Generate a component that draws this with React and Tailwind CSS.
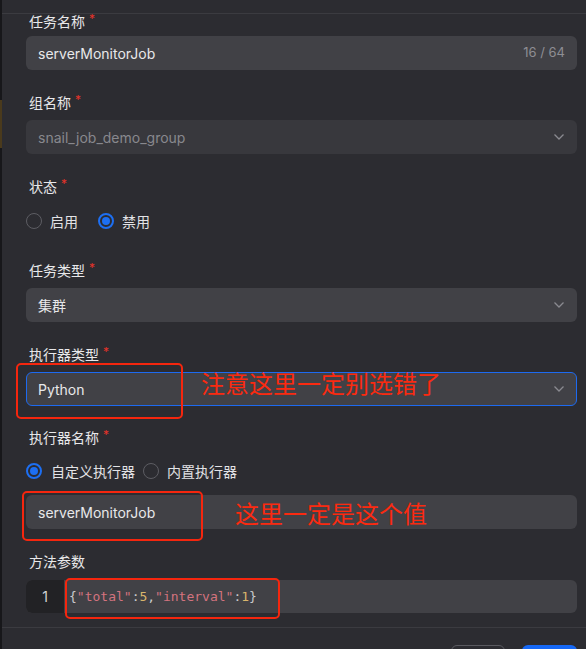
import React from "react";

const cjk = "font-['Inter','Noto_Sans_CJK_SC',sans-serif]";

function Label({ text, required = true, first = false, className = "" }) {
  return (
    <div
      className={`flex items-center pl-[3px] text-[14px] text-[#e8e8ea] ${
        first ? "h-[16px] leading-[16px]" : "h-[22px] leading-[22px]"
      } ${className}`}
    >
      <span>{text}</span>
      {required && <span className="ml-[4px] text-[#e5332a] text-[12px] leading-none relative top-[-3px]">*</span>}
    </div>
  );
}

function Chevron() {
  return (
    <svg width="12" height="8" viewBox="0 0 12 8" className="shrink-0">
      <polyline points="1.5,1.5 6,6 10.5,1.5" fill="none" stroke="#8a8a90" strokeWidth="1.3" />
    </svg>
  );
}

function Select({ value, disabled, focused }) {
  return (
    <div
      className={`h-[34px] rounded-[6px] flex items-center justify-between text-[14px] ${
        disabled ? "bg-[#38383d] text-[#88888e]" : "bg-[#414146] text-[#e8e8ea]"
      } ${focused ? "border border-[#1d6af0] px-[11px]" : "px-[12px]"}`}
    >
      <span>{value}</span>
      <Chevron />
    </div>
  );
}

function Radio({ checked }) {
  return checked ? (
    <span className="w-[16px] h-[16px] rounded-full border-[2px] border-[#1d6ff2] flex items-center justify-center shrink-0">
      <span className="w-[8px] h-[8px] rounded-full bg-[#1d6ff2]" />
    </span>
  ) : (
    <span className="block w-[16px] h-[16px] rounded-full border border-[#5d5d63] shrink-0" />
  );
}

export default function App() {
  return (
    <div className={`w-[586px] h-[649px] overflow-hidden flex bg-[#2c2c31] ${cjk}`}>
      {/* left edge of the page behind the drawer */}
      <div className="w-[2px] bg-[#17171a] flex flex-col">
        <div className="h-[100px]" />
        <div className="h-[48px] bg-[#4a3a1c]" />
      </div>

      <div className="flex-1 flex flex-col">
        <div className="h-[14px] border-b border-[#3b3b40] shrink-0" />

        <div className="pl-[24px] pr-[9px] flex flex-col">
          {/* 任务名称 */}
          <Label text="任务名称" first />
          <div className="mt-[6px] h-[34px] rounded-[6px] bg-[#414146] flex items-center justify-between px-[12px] text-[14px]">
            <span className="text-[#e8e8ea]">serverMonitorJob</span>
            <span className="text-[13px] text-[#8e8e94]">16 / 64</span>
          </div>

          {/* 组名称 */}
          <Label text="组名称" className="mt-[22px]" />
          <div className="mt-[6px]">
            <Select value="snail_job_demo_group" disabled />
          </div>

          {/* 状态 */}
          <Label text="状态" className="mt-[22px]" />
          <div className="mt-[12px] h-[22px] flex items-center text-[14px] text-[#e3e3e6]">
            <Radio />
            <span className="ml-[8px]">启用</span>
            <span className="ml-[20px]">
              <Radio checked />
            </span>
            <span className="ml-[8px]">禁用</span>
          </div>

          {/* 任务类型 */}
          <Label text="任务类型" className="mt-[28px]" />
          <div className="mt-[6px]">
            <Select value="集群" />
          </div>

          {/* 执行器类型 */}
          <Label text="执行器类型" className="mt-[22px]" />
          <div className="mt-[6px] relative">
            <Select value="Python" focused />
            <div className="absolute left-[-10px] top-[-9px] w-[167px] h-[56px] border-[2px] border-[#f5260e] rounded-[5px]" />
            <div className="absolute left-[175px] top-[1px] text-[24px] leading-[24px] text-[#fb2a10] whitespace-nowrap">
              注意这里一定别选错了
            </div>
          </div>

          {/* 执行器名称 */}
          <Label text="执行器名称" className="mt-[21px]" />
          <div className="mt-[11px] h-[22px] flex items-center text-[14px] text-[#e3e3e6]">
            <Radio checked />
            <span className="ml-[9px]">自定义执行器</span>
            <span className="ml-[8px]">
              <Radio />
            </span>
            <span className="ml-[8px]">内置执行器</span>
          </div>
          <div className="mt-[13px] relative">
            <div className="h-[34px] rounded-[6px] bg-[#414146] flex items-center px-[12px] text-[14px] text-[#e8e8ea]">
              serverMonitorJob
            </div>
            <div className="absolute left-[-4px] top-[-4px] w-[181px] h-[50px] border-[2px] border-[#f5260e] rounded-[5px]" />
            <div className="absolute left-[209px] top-[8px] text-[24px] leading-[24px] text-[#fb2a10] whitespace-nowrap">
              这里一定是这个值
            </div>
          </div>

          {/* 方法参数 */}
          <Label text="方法参数" required={false} className="mt-[22px]" />
          <div className="mt-[7px] relative">
            <div className="h-[33px] rounded-[6px] bg-[#414146] flex overflow-hidden">
              <div className="w-[38px] bg-[#222225] flex items-center justify-center text-[14px] text-[#d4d4d6]">1</div>
              <div className="flex items-center pl-[5px] font-['DejaVu_Sans_Mono',monospace] text-[13px]">
                <span className="text-[#c9c9cc]">{"{"}</span>
                <span className="text-[#d3737f]">"total"</span>
                <span className="text-[#c9c9cc]">:</span>
                <span className="text-[#d9b56c]">5</span>
                <span className="text-[#c9c9cc]">,</span>
                <span className="text-[#d3737f]">"interval"</span>
                <span className="text-[#c9c9cc]">:</span>
                <span className="text-[#d9b56c]">1</span>
                <span className="text-[#c9c9cc]">{"}"}</span>
              </div>
            </div>
            <div className="absolute left-[39px] top-[-2px] w-[215px] h-[41px] border-[2px] border-[#f5260e] rounded-[5px]" />
          </div>
        </div>

        {/* footer */}
        <div className="mt-[14px] border-t border-[#3b3b40] flex justify-end gap-[17px] pr-[9px] pt-[17px]">
          <div className="w-[54px] h-[32px] rounded-[6px] border border-[#5a5a60]" />
          <div className="w-[55px] h-[32px] rounded-[6px] bg-[#1668f5]" />
        </div>
      </div>
    </div>
  );
}
